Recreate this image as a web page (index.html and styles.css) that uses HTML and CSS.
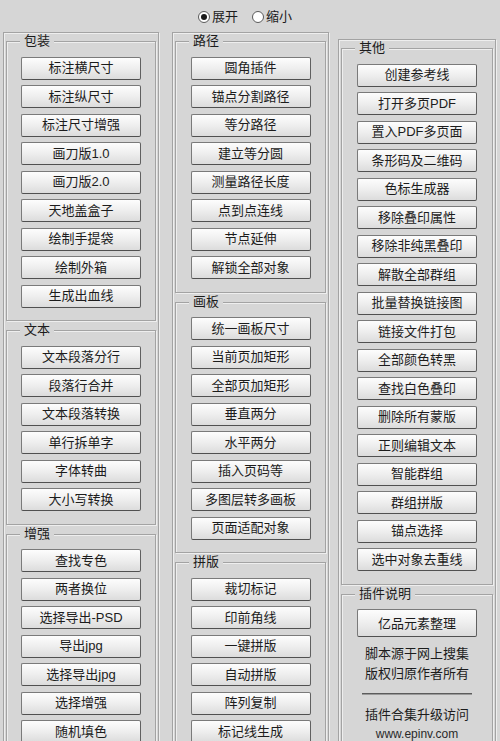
FILE: index.html
```
<!DOCTYPE html>
<html lang="zh-CN">
<head>
<meta charset="utf-8">
<title>插件合集</title>
<link rel="stylesheet" href="styles.css">
</head>
<body>
<div class="radios">
  <label class="radio"><span class="dot checked"></span><span>展开</span></label>
  <label class="radio"><span class="dot"></span><span>缩小</span></label>
</div>
<div class="columns">
  <div class="col col1">
    <div class="gb">
      <div class="gb-title">包装</div>
      <button class="btn">标注横尺寸</button>
      <button class="btn">标注纵尺寸</button>
      <button class="btn">标注尺寸增强</button>
      <button class="btn">画刀版1.0</button>
      <button class="btn">画刀版2.0</button>
      <button class="btn">天地盖盒子</button>
      <button class="btn">绘制手提袋</button>
      <button class="btn">绘制外箱</button>
      <button class="btn">生成出血线</button>
    </div>
    <div class="gb">
      <div class="gb-title">文本</div>
      <button class="btn">文本段落分行</button>
      <button class="btn">段落行合并</button>
      <button class="btn">文本段落转换</button>
      <button class="btn">单行拆单字</button>
      <button class="btn">字体转曲</button>
      <button class="btn">大小写转换</button>
    </div>
    <div class="gb">
      <div class="gb-title">增强</div>
      <button class="btn">查找专色</button>
      <button class="btn">两者换位</button>
      <button class="btn">选择导出-PSD</button>
      <button class="btn">导出jpg</button>
      <button class="btn">选择导出jpg</button>
      <button class="btn">选择增强</button>
      <button class="btn">随机填色</button>
    </div>
  </div>
  <div class="col col2">
    <div class="gb">
      <div class="gb-title">路径</div>
      <button class="btn">圆角插件</button>
      <button class="btn">锚点分割路径</button>
      <button class="btn">等分路径</button>
      <button class="btn">建立等分圆</button>
      <button class="btn">测量路径长度</button>
      <button class="btn">点到点连线</button>
      <button class="btn">节点延伸</button>
      <button class="btn">解锁全部对象</button>
    </div>
    <div class="gb">
      <div class="gb-title">画板</div>
      <button class="btn">统一画板尺寸</button>
      <button class="btn">当前页加矩形</button>
      <button class="btn">全部页加矩形</button>
      <button class="btn">垂直两分</button>
      <button class="btn">水平两分</button>
      <button class="btn">插入页码等</button>
      <button class="btn">多图层转多画板</button>
      <button class="btn">页面适配对象</button>
    </div>
    <div class="gb">
      <div class="gb-title">拼版</div>
      <button class="btn">裁切标记</button>
      <button class="btn">印前角线</button>
      <button class="btn">一键拼版</button>
      <button class="btn">自动拼版</button>
      <button class="btn">阵列复制</button>
      <button class="btn">标记线生成</button>
    </div>
  </div>
  <div class="col col3">
    <div class="gb">
      <div class="gb-title">其他</div>
      <button class="btn">创建参考线</button>
      <button class="btn">打开多页PDF</button>
      <button class="btn">置入PDF多页面</button>
      <button class="btn">条形码及二维码</button>
      <button class="btn">色标生成器</button>
      <button class="btn">移除叠印属性</button>
      <button class="btn">移除非纯黑叠印</button>
      <button class="btn">解散全部群组</button>
      <button class="btn">批量替换链接图</button>
      <button class="btn">链接文件打包</button>
      <button class="btn">全部颜色转黑</button>
      <button class="btn">查找白色叠印</button>
      <button class="btn">删除所有蒙版</button>
      <button class="btn">正则编辑文本</button>
      <button class="btn">智能群组</button>
      <button class="btn">群组拼版</button>
      <button class="btn">锚点选择</button>
      <button class="btn">选中对象去重线</button>
    </div>
    <div class="gb">
      <div class="gb-title">插件说明</div>
      <button class="btn btn-tall">亿品元素整理</button>
      <div class="notes">
        <p>脚本源于网上搜集</p>
        <p>版权归原作者所有</p>
        <div class="rule"></div>
        <p>插件合集升级访问</p>
        <p class="url">www.epinv.com</p>
      </div>
    </div>
  </div>
</div>
</body>
</html>
```
FILE: styles.css
```
* { box-sizing: border-box; }
html, body { margin: 0; padding: 0; }
body {
  width: 500px;
  height: 741px;
  overflow: hidden;
  background: #d6d6d6;
  font-family: "Liberation Sans", "Noto Sans CJK SC", sans-serif;
  font-size: 13px;
  color: #1c1c1c;
}
.radios {
  height: 32px;
  padding: 2px 0 0 198px;
  display: flex;
  align-items: center;
  gap: 14px;
}
.radio {
  display: flex;
  align-items: center;
  gap: 2px;
  line-height: 16px;
}
.dot {
  width: 12px;
  height: 12px;
  border-radius: 50%;
  border: 1px solid #5a5a5a;
  background: #ffffff;
  display: flex;
  align-items: center;
  justify-content: center;
}
.dot.checked::after {
  content: "";
  width: 6px;
  height: 6px;
  border-radius: 50%;
  background: #1a1a1a;
}
.columns {
  display: flex;
  align-items: flex-start;
  padding-left: 3px;
}
.col {
  border: 1px solid #a3a3a3;
  box-shadow: inset 1px 1px 0 #eeeeee, 1px 1px 0 #eeeeee;
  padding: 8px 2px 0 2px;
  height: 780px;
  display: flex;
  flex-direction: column;
  gap: 9px;
}
.col1 { width: 156px; }
.col2 { width: 157px; margin-left: 13px; }
.col3 { width: 158px; margin-left: 9px; margin-top: 7px; }
.gb {
  border: 1px solid #a3a3a3;
  box-shadow: inset 1px 1px 0 #eeeeee, 1px 1px 0 #eeeeee;
  padding: 0 0 12.5px 0;
  display: flex;
  flex-direction: column;
  align-items: center;
  gap: 5.5px;
}
.gb-title {
  align-self: flex-start;
  margin: -8px 0 3px 13px;
  padding: 0 4px;
  height: 14px;
  line-height: 14px;
  background: #d6d6d6;
  white-space: nowrap;
}
.btn {
  width: 120px;
  height: 23px;
  padding: 0;
  margin: 0;
  font: inherit;
  line-height: 20px;
  color: #1c1c1c;
  border: 1px solid #7a7a7a;
  border-bottom-color: #505050;
  border-right-color: #606060;
  border-radius: 2px;
  background: linear-gradient(#fdfdfd, #eeeeee 50%, #dcdcdc);
  white-space: nowrap;
  flex: none;
}
.btn-tall { height: 28px; line-height: 25px; }
.notes {
  align-self: stretch;
  text-align: center;
  margin-top: 1px;
}
.notes p {
  margin: 0;
  line-height: 20px;
}
.notes .url {
  font-size: 12px;
  line-height: 18px;
  color: #2a2a2a;
}
.rule {
  width: 110px;
  height: 2px;
  margin: 9px auto 10px;
  border-top: 1px solid #5c5c5c;
  border-bottom: 1px solid #9a9a9a;
}
```
